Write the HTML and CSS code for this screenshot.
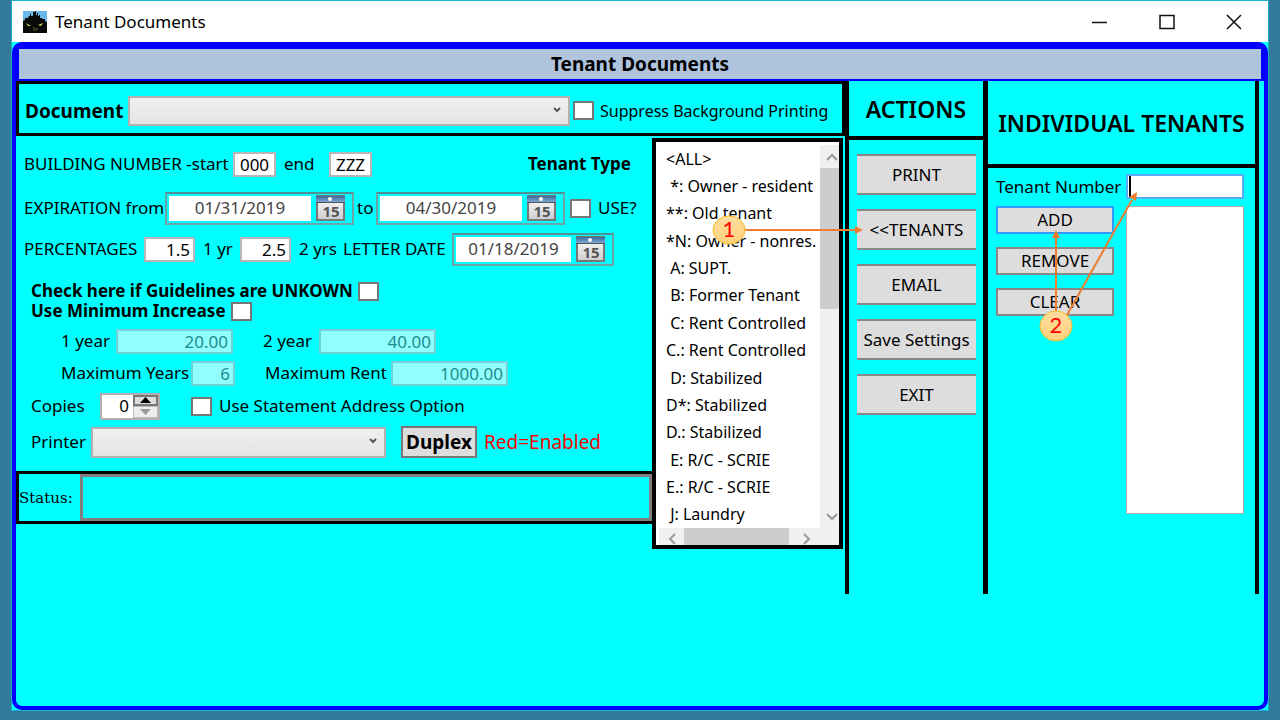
FILE: index.html
```html
<!DOCTYPE html>
<html lang="en">
<head>
<meta charset="utf-8">
<title>Tenant Documents</title>
<link rel="stylesheet" href="styles.css">
</head>
<body>
<svg class="defs" aria-hidden="true">
  <defs>
    <linearGradient id="calTop" x1="0" y1="0" x2="0" y2="1"><stop offset="0" stop-color="#3f6796"/><stop offset="1" stop-color="#7ba7d6"/></linearGradient>
    <linearGradient id="calPage" x1="0" y1="0" x2="0" y2="1"><stop offset="0" stop-color="#fff"/><stop offset="1" stop-color="#ccc"/></linearGradient>
    <linearGradient id="badge" x1="0" y1="0" x2="0" y2="1"><stop offset="0" stop-color="#ffdda0"/><stop offset="1" stop-color="#ffd27a"/></linearGradient>
    <symbol id="calendar" viewBox="0 0 29 26">
      <rect x="1" y="1" width="27" height="24" fill="url(#calPage)" stroke="#777" stroke-width="2"/>
      <rect x="0" y="1" width="29" height="6" fill="url(#calTop)"/>
      <rect x="0" y="7" width="29" height="1" fill="#555"/>
      <circle cx="14" cy="4" r="2" fill="#fff"/>
      <text x="15" y="22" text-anchor="middle" class="cal-text">15</text>
    </symbol>
    <symbol id="chevron" viewBox="0 0 10 8"><path d="M2 2l3 3 3-3" fill="none" stroke="#555" stroke-width="2"/></symbol>
  </defs>
</svg>
<div class="window">
  <header class="titlebar">
    <svg class="app-icon" viewBox="0 0 24 22" aria-hidden="true">
      <rect width="24" height="22" fill="#67b7ea"/>
      <path d="M0 22V10l2-1V7h3l1-2h1V3h1v2h2V1h2v-1h1v4h1V2h1v3h1V4h1v3h2v1h3v2l2 1v11z" fill="#080a08"/>
      <path d="M3 12l5 3H5zM20 12l-5 2 3 1z" fill="#d8d35c"/>
      <path d="M11 16v4M14 17l-1 3" stroke="#6a6b30" fill="none"/>
    </svg>
    <span class="title-text">Tenant Documents</span>
    <button class="win-btn" aria-label="Minimize"><svg viewBox="0 0 16 16"><path d="M0 8.500h15" stroke="#111" stroke-width="1.500" fill="none"/></svg></button>
    <button class="win-btn" aria-label="Maximize"><svg viewBox="0 0 16 16"><path d="M1 1.500h14v13H1z" stroke="#111" stroke-width="1.500" fill="none"/></svg></button>
    <button class="win-btn" aria-label="Close"><svg viewBox="0 0 16 16"><path d="M1 1l14 14M15 1L1 15" stroke="#111" stroke-width="1.500" fill="none"/></svg></button>
  </header>
  <div class="client">
    <div class="frame">
      <div class="banner"><h1>Tenant Documents</h1></div>
      <div class="columns">
        <main class="main">
          <section class="doc-bar">
            <label class="doc-label" for="document">Document</label>
            <span class="combo doc-combo"><select id="document"><option></option></select><svg><use href="#chevron"/></svg></span>
            <input type="checkbox" class="check" id="suppress">
            <label class="suppress" for="suppress">Suppress Background Printing</label>
          </section>
          <div class="body">
            <form class="form">
              <div class="fields">
                <div class="row building">
                  <label for="bstart">BUILDING NUMBER -start</label>
                  <input class="text center" id="bstart" value="000">
                  <label for="bend">end</label>
                  <input class="text center" id="bend" value="ZZZ">
                  <strong id="typeLabel">Tenant Type</strong>
                </div>
                <div class="row expiration">
                  <label for="from">EXPIRATION from</label>
                  <span class="date"><input id="from" value="01/31/2019"><button type="button" aria-label="Pick start date"><svg><use href="#calendar"/></svg></button></span>
                  <label for="to">to</label>
                  <span class="date"><input id="to" value="04/30/2019"><button type="button" aria-label="Pick end date"><svg><use href="#calendar"/></svg></button></span>
                  <input type="checkbox" class="check" id="use">
                  <label for="use">USE?</label>
                </div>
                <div class="row percentages">
                  <label for="p1">PERCENTAGES</label>
                  <input class="text right" id="p1" value="1.5">
                  <label for="p2">1 yr</label>
                  <input class="text right" id="p2" value="2.5">
                  <span>2 yrs</span>
                  <label for="letter">LETTER DATE</label>
                  <span class="date"><input id="letter" value="01/18/2019"><button type="button" aria-label="Pick letter date"><svg><use href="#calendar"/></svg></button></span>
                </div>
                <div class="row option guidelines">
                  <label for="unknown">Check here if Guidelines are UNKOWN</label>
                  <input type="checkbox" class="check" id="unknown">
                </div>
                <div class="row option minimum">
                  <label for="min">Use Minimum Increase</label>
                  <input type="checkbox" class="check" id="min">
                </div>
                <div class="row years">
                  <label for="y1">1 year</label>
                  <input class="text right" id="y1" value="20.00" disabled>
                  <label for="y2">2 year</label>
                  <input class="text right" id="y2" value="40.00" disabled>
                </div>
                <div class="row maximum">
                  <label for="my">Maximum Years</label>
                  <input class="text right" id="my" value="6" disabled>
                  <label for="mr">Maximum Rent</label>
                  <input class="text right" id="mr" value="1000.00" disabled>
                </div>
                <div class="row copies">
                  <label for="copies">Copies</label>
                  <span class="spinner">
                    <input id="copies" value="0">
                    <button type="button" class="up" aria-label="More copies"><svg viewBox="0 0 11 6"><path d="M0 6l5.500-6L11 6z" fill="#000"/></svg></button>
                    <button type="button" class="down" aria-label="Fewer copies"><svg viewBox="0 0 11 6"><path d="M0 0l5.500 6L11 0z" fill="#999"/></svg></button>
                  </span>
                  <input type="checkbox" class="check" id="address">
                  <label for="address">Use Statement Address Option</label>
                </div>
                <div class="row printer">
                  <label for="printer">Printer</label>
                  <span class="combo"><select id="printer"><option></option></select><svg><use href="#chevron"/></svg></span>
                  <button type="button" class="duplex">Duplex</button>
                  <span class="enabled">Red=Enabled</span>
                </div>
              </div>
              <div class="status"><span>Status:</span><output class="status-field"></output></div>
            </form>
            <div class="type-list">
              <ul class="types" role="listbox" aria-labelledby="typeLabel">
                <li role="option">&lt;ALL&gt;</li>
                <li role="option"> *: Owner - resident</li>
                <li role="option">**: Old tenant</li>
                <li role="option">*N: Owner - nonres.</li>
                <li role="option"> A: SUPT.</li>
                <li role="option"> B: Former Tenant</li>
                <li role="option"> C: Rent Controlled</li>
                <li role="option">C.: Rent Controlled</li>
                <li role="option"> D: Stabilized</li>
                <li role="option">D*: Stabilized</li>
                <li role="option">D.: Stabilized</li>
                <li role="option"> E: R/C - SCRIE</li>
                <li role="option">E.: R/C - SCRIE</li>
                <li role="option"> J: Laundry</li>
              </ul>
              <div class="vscroll">
                <button type="button" aria-label="Scroll up"><svg viewBox="0 0 12 8"><path d="M1 7l5-5 5 5"/></svg></button>
                <span class="thumb"></span>
                <button type="button" aria-label="Scroll down"><svg viewBox="0 0 12 8"><path d="M1 1l5 5 5-5"/></svg></button>
              </div>
              <div class="hscroll">
                <button type="button" aria-label="Scroll left"><svg viewBox="0 0 8 12"><path d="M7 1L2 6l5 5"/></svg></button>
                <span class="thumb"></span>
                <button type="button" aria-label="Scroll right"><svg viewBox="0 0 8 12"><path d="M1 1l5 5-5 5"/></svg></button>
              </div>
            </div>
          </div>
        </main>
        <section class="actions">
          <h2>ACTIONS</h2>
          <div class="action-buttons">
            <button>PRINT</button>
            <button>&lt;&lt;TENANTS</button>
            <button>EMAIL</button>
            <button>Save Settings</button>
            <button>EXIT</button>
          </div>
        </section>
        <section class="tenants">
          <h2>INDIVIDUAL TENANTS</h2>
          <div class="tenant-grid">
            <label for="tenant">Tenant Number</label>
            <span class="tenant-input"><input id="tenant"><i class="caret"></i></span>
            <div class="tenant-buttons">
              <button class="focused">ADD</button>
              <button>REMOVE</button>
              <button>CLEAR</button>
            </div>
            <div class="tenant-list" role="listbox" aria-label="Selected tenants"></div>
          </div>
        </section>
      </div>
    </div>
  </div>
</div>
<svg class="callouts" viewBox="0 0 580 360" aria-hidden="true">
  <g stroke="#ed7d31" stroke-width="2" fill="none">
    <path d="M45 230H156M356 312V238M367 315L432 200"/>
  </g>
  <g fill="#ed7d31">
    <path d="M155 226l8 4-8 4zM352 238l4-8 4 8zM429 197l8-5-1 9z"/>
  </g>
  <g fill="url(#badge)" stroke="#f7bd24">
    <ellipse cx="29" cy="230" rx="16" ry="14"/>
    <ellipse cx="356" cy="326" rx="16" ry="15"/>
  </g>
  <text x="29" y="237" text-anchor="middle" class="badge-text">1</text>
  <text x="356" y="333" text-anchor="middle" class="badge-text">2</text>
</svg>
</body>
</html>
```
FILE: styles.css
```css
* { box-sizing: border-box; }

body {
  margin: 0;
  position: relative;
  min-height: 100vh;
  padding: 1px 12px 10px;
  display: flex;
  background: #2f7b99;
  color: #000;
  font: 17px/20px "Noto Sans", "Open Sans", sans-serif;
}
input, button, select { font: inherit; color: inherit; margin: 0; border-radius: 0; }
h1, h2, ul { margin: 0; padding: 0; }
label, span, strong { white-space: nowrap; }
svg { display: block; }
.defs { position: absolute; width: 0; height: 0; }

.window {
  flex: 1;
  display: flex;
  flex-direction: column;
  background: #0ff;
  outline: 1px solid #1db0c4;
}

.titlebar {
  height: 41px;
  display: flex;
  align-items: center;
  padding: 0 1px 0 11px;
  background: #fff;
}
.app-icon { width: 24px; height: 22px; }
.title-text { margin: 0 auto 0 8px; }
.win-btn {
  width: 67px;
  height: 40px;
  display: grid;
  place-items: center;
  padding: 0;
  border: 0;
  background: none;
}
.win-btn svg { width: 16px; height: 16px; }

.client { flex: 1; display: flex; }
.frame {
  flex: 1;
  border: solid #00f;
  border-width: 7px 4px 4px;
  border-radius: 10px;
}
.banner { padding: 0 3px 2px; background: #00f; }
.banner h1 {
  background: #b0c4de;
  text-align: center;
  font-size: 19px;
  line-height: 30px;
}

.columns { display: flex; min-height: 513px; }
.main { flex: 1; }

.doc-bar {
  height: 55px;
  display: flex;
  align-items: center;
  padding: 4px 6px 0;
  border: 3px solid #000;
}
.doc-label { width: 103px; font-size: 19px; font-weight: 700; }
.doc-combo { flex: 1; height: 30px; margin-right: 3px; }
.suppress { width: 236px; margin-left: 6px; font-size: 16px; }

.combo { position: relative; display: block; }
.combo select {
  width: 100%;
  height: 100%;
  appearance: none;
  border: 2px solid #b5b0b0;
  background: linear-gradient(#f0f0f0, #e4e4e4);
}
.combo svg {
  position: absolute;
  right: 8px;
  top: 50%;
  width: 10px;
  height: 8px;
  margin-top: -5px;
  pointer-events: none;
}

.check {
  appearance: none;
  width: 21px;
  height: 19px;
  border: 2px solid #777;
  background: #fff;
}

.body {
  display: grid;
  grid-template-columns: 1fr 191px;
  align-items: start;
  padding: 2px 2px 0 0;
}
.fields { padding: 6px 0 13px 8px; }
.row { display: grid; align-items: center; }
.building { height: 40px; grid-template-columns: 209px 51px 45px 43px 1fr; }
.building #bstart { width: 43px; }
.building strong { padding-left: 156px; }
.expiration { height: 48px; grid-template-columns: 141px 189px 22px 189px 28px 1fr; }
.expiration label[for="to"] { padding-left: 3px; }
.expiration .check { margin-left: 5px; }
.expiration label[for="use"] { padding-left: 5px; }
.percentages { height: 34px; grid-template-columns: 120px 51px 45px 51px 52px 109px 162px; }
.percentages label[for="p2"], .percentages span:not(.date) { padding-left: 8px; }
.option { grid-template-columns: max-content 21px; gap: 5px; margin-left: 7px; height: 20px; font-weight: 700; }
.guidelines { margin-top: 15px; }
.years { height: 28px; margin: 6px 0 0 37px; grid-template-columns: 55px 117px 86px 117px; }
.years label[for="y2"], .maximum label[for="mr"] { padding-left: 30px; }
.maximum { height: 28px; margin: 4px 0 0 37px; grid-template-columns: 130px 44px 156px 117px; }
.copies { height: 28px; margin: 5px 0 0 7px; grid-template-columns: 69px 91px 28px 1fr; }
.printer { height: 32px; margin: 6px 0 0 7px; grid-template-columns: 60px 295px 76px 1fr; }
.printer .combo { height: 31px; }

.text {
  width: 100%;
  height: 25px;
  padding: 0 4px;
  border: 2px solid #b8b4b8;
  background: #fff;
}
.text:disabled { background: #91ffff; border-color: #6cd3d6; color: #1c8c8c; }
.center { text-align: center; padding: 0; }
.right { text-align: right; padding: 0 3px; }

.date {
  height: 33px;
  display: flex;
  align-items: center;
  padding: 0 7px 0 2px;
  border: 2px solid #6aa3a8;
  border-top-color: #4f9096;
}
.date input {
  flex: 1;
  min-width: 0;
  height: 25px;
  padding: 0 0 2px;
  border: 0;
  background: #fff;
  color: #444;
  text-align: center;
}
.date button { width: 29px; height: 26px; margin-left: 5px; padding: 0; border: 0; background: none; }
.date svg { width: 29px; height: 26px; }
.cal-text { font: 700 15px "Noto Sans", sans-serif; fill: #555; }

.spinner {
  width: 60px;
  height: 27px;
  display: grid;
  grid-template: 1fr 1fr / 1fr 25px;
  border: 2px solid #b0b0b0;
  background: #fff;
}
.spinner input { grid-row: 1 / 3; min-width: 0; padding: 0 4px; border: 0; text-align: right; }
.spinner button { display: grid; place-items: center; padding: 0; border: 1px solid #bbb; background: #eee; }
.spinner .up { border: 2px solid #777; background: #ddd; }
.spinner svg { width: 11px; height: 6px; }

.duplex {
  height: 32px;
  margin-left: 15px;
  padding: 0;
  width: 76px;
  border: 2px solid #777;
  background: #ddd;
  font-size: 19px;
  font-weight: 700;
}
.enabled { padding-left: 22px; font-size: 19px; color: #f00; }

.status {
  height: 53px;
  display: grid;
  grid-template-columns: 61px 1fr;
  align-items: center;
  border: 3px solid #000;
  border-right: 0;
  font: 15px/20px "DejaVu Serif", serif;
}
.status-field { height: 100%; border: 3px solid #808080; }

.type-list {
  height: 411px;
  display: grid;
  grid-template: 1fr 17px / 1fr 19px;
  padding: 3px 0 0 3px;
  border: 4px solid #000;
  background: #fff;
}
.types {
  display: flex;
  flex-direction: column;
  min-width: 0;
  padding-left: 7px;
  list-style: none;
  overflow: hidden;
  font-size: 16px;
}
.types li { flex: 1; display: flex; align-items: center; white-space: pre; }
.vscroll, .hscroll { display: flex; background: #f0f0f0; }
.vscroll { flex-direction: column; }
.hscroll { grid-column: 1 / 3; }
.vscroll button, .hscroll button { display: grid; place-items: center; padding: 0; border: 0; background: none; }
.vscroll button { height: 23px; padding-left: 5px; }
.hscroll button { width: 25px; padding-top: 4px; }
.vscroll svg { width: 12px; height: 8px; }
.hscroll svg { width: 8px; height: 12px; }
.vscroll path, .hscroll path { fill: none; stroke: #999; stroke-width: 2; }
.thumb { background: #cdcdcd; }
.vscroll .thumb { height: 141px; margin-bottom: auto; }
.hscroll .thumb { width: 105px; margin-right: 5px; }

h2 {
  display: grid;
  place-items: center;
  border-bottom: 4px solid #000;
  font-weight: 600;
  font-size: 23px;
  line-height: 28px;
}
.actions { width: 138px; border-left: 4px solid #000; }
.actions h2 { height: 59px; }
.action-buttons { display: grid; gap: 14px; padding: 14px 7px 0 8px; }
.action-buttons button {
  height: 41px;
  padding: 0;
  border: solid #888;
  border-width: 2px 0;
  background: #ddd;
}

.tenants { width: 276px; margin-right: 5px; border: solid #000; border-width: 0 4px 0 5px; }
.tenants h2 { height: 87px; }
.tenant-grid {
  display: grid;
  grid-template-columns: 130px 1fr;
  row-gap: 7px;
  padding: 6px 11px 0 8px;
}
.tenant-grid label { align-self: center; }
.tenant-input { position: relative; }
.tenant-input input { display: block; width: 100%; height: 25px; border: 2px solid #5aa9f5; background: #fff; }
.caret { position: absolute; left: 3px; top: 2px; width: 2px; height: 21px; background: #000; }
.tenant-buttons { display: grid; align-content: start; gap: 13px; width: 118px; }
.tenant-buttons button { height: 28px; padding: 0; border: 2px solid #888; background: #ddd; line-height: 20px; }
.tenant-buttons .focused { border-color: #3399ff; }
.tenant-list { height: 308px; border: 1px solid #b0b0b0; background: #fff; }

.callouts { position: absolute; top: 0; right: 0; width: 580px; height: 360px; pointer-events: none; }
.badge-text { font: 22px Lato, sans-serif; fill: #f00; }
```
